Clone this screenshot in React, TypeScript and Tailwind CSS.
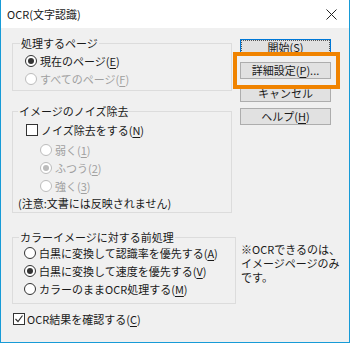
import React from 'react';

const font = { fontFamily: '"Noto Sans CJK JP", "Noto Sans", sans-serif' };

function Key({ k }: { k: string }) {
  return (
    <>
      (<span className="underline underline-offset-2">{k}</span>)
    </>
  );
}

function Radio({ checked, disabled }: { checked?: boolean; disabled?: boolean }) {
  return (
    <span
      className={`flex h-[12px] w-[12px] shrink-0 items-center justify-center rounded-full border bg-white ${
        disabled ? 'border-[#bcbcbc]' : 'border-[#333]'
      }`}
    >
      {checked && (
        <span className={`h-[6px] w-[6px] rounded-full ${disabled ? 'bg-[#bcbcbc]' : 'bg-[#333]'}`} />
      )}
    </span>
  );
}

function Check({ checked }: { checked?: boolean }) {
  return (
    <span className="flex h-[12px] w-[12px] shrink-0 items-center justify-center border border-[#333] bg-white">
      {checked && (
        <svg width="10" height="10" viewBox="0 0 10 10">
          <path d="M1.5 5 L4 7.5 L8.5 1.5" fill="none" stroke="#333" strokeWidth="1.2" />
        </svg>
      )}
    </span>
  );
}

function Btn({ children, isDefault }: { children: React.ReactNode; isDefault?: boolean }) {
  return (
    <div
      className={`flex h-[17px] w-[91px] items-center justify-center bg-[#e1e1e1] text-[11px] leading-none ${
        isDefault ? 'border border-[#0078d7]' : 'border border-[#adadad]'
      }`}
    >
      {isDefault ? (
        <div className="flex h-full w-full items-center justify-center border border-dotted border-[#555]">
          {children}
        </div>
      ) : (
        children
      )}
    </div>
  );
}

export default function App() {
  return (
    <div
      className="relative flex h-[343px] w-[350px] flex-col border-x border-b border-[#179bd7] bg-[#f0f0f0] text-[#1a1a1a]"
      style={font}
    >
      {/* title bar */}
      <div className="flex h-[28px] items-center justify-between bg-white pl-[6px] pr-[12px]">
        <span className="text-[11px]">OCR(文字認識)</span>
        <svg width="11" height="11" viewBox="0 0 11 11">
          <path d="M0.5 0.5 L10.5 10.5 M10.5 0.5 L0.5 10.5" stroke="#222" strokeWidth="1" />
        </svg>
      </div>

      <div className="flex pl-[11px] pt-[8px]">
        <div className="flex w-[220px] flex-col gap-[13px]">
          <fieldset className="border border-[#dcdcdc] px-[12px] pt-[2px] pb-[2px]">
            <legend className="ml-[-5px] px-[1px] text-[11px] leading-[14px]">処理するページ</legend>
            <div className="flex h-[18px] items-center gap-[3px] text-[11px]">
              <Radio checked />
              <span>
                現在のページ<Key k="E" />
              </span>
            </div>
            <div className="flex h-[18px] items-center gap-[3px] text-[11px] text-[#a0a0a0]">
              <Radio disabled />
              <span>
                すべてのページ<Key k="F" />
              </span>
            </div>
          </fieldset>

          <fieldset className="border border-[#dcdcdc] pl-[5px] pt-[3px] pb-[0px]">
            <legend className="ml-[0px] px-[1px] text-[11px] leading-[14px]">イメージのノイズ除去</legend>
            <div className="flex h-[18px] items-center gap-[3px] pl-[8px] text-[11px]">
              <Check />
              <span>
                ノイズ除去をする<Key k="N" />
              </span>
            </div>
            <div className="flex flex-col pl-[22px] pt-[2px] text-[11px] text-[#a0a0a0]">
              <div className="flex h-[18px] items-center gap-[3px]">
                <Radio disabled />
                <span>
                  弱く<Key k="1" />
                </span>
              </div>
              <div className="flex h-[18px] items-center gap-[3px]">
                <Radio checked disabled />
                <span>
                  ふつう<Key k="2" />
                </span>
              </div>
              <div className="flex h-[18px] items-center gap-[3px]">
                <Radio disabled />
                <span>
                  強く<Key k="3" />
                </span>
              </div>
            </div>
            <div className="flex h-[17px] items-center text-[11px]">(注意:文書には反映されません)</div>
          </fieldset>
        </div>

        <div className="ml-[8px] flex flex-col gap-[6px] pt-[3px]">
          <Btn isDefault>
            開始<Key k="S" />
          </Btn>
          <Btn>
            詳細設定<Key k="P" />...
          </Btn>
          <Btn>キャンセル</Btn>
          <Btn>
            ヘルプ<Key k="H" />
          </Btn>
        </div>
      </div>

      <div className="flex pl-[11px] pt-[17px]">
        <fieldset className="w-[224px] border border-[#dcdcdc] pl-[11px] pb-[5px]">
          <legend className="ml-[-5px] px-[1px] text-[11px] leading-[14px]">カラーイメージに対する前処理</legend>
          <div className="flex h-[18px] items-center gap-[3px] text-[11px]">
            <Radio />
            <span>
              白黒に変換して認識率を優先する<Key k="A" />
            </span>
          </div>
          <div className="flex h-[18px] items-center gap-[3px] text-[11px]">
            <Radio checked />
            <span>
              白黒に変換して速度を優先する<Key k="V" />
            </span>
          </div>
          <div className="flex h-[18px] items-center gap-[3px] text-[11px]">
            <Radio />
            <span>
              カラーのままOCR処理する<Key k="M" />
            </span>
          </div>
        </fieldset>
        <div className="ml-[5px] flex flex-col pt-[12px] text-[11px]">
          <div className="flex h-[14px] items-center">※OCRできるのは、</div>
          <div className="flex h-[14px] items-center">イメージページのみ</div>
          <div className="flex h-[14px] items-center">です。</div>
        </div>
      </div>

      <div className="mt-[6px] flex h-[18px] items-center gap-[2px] pl-[12px] text-[11px]">
        <Check checked />
        <span>
          OCR結果を確認する<Key k="C" />
        </span>
      </div>

      {/* highlight box */}
      <div className="absolute left-[232px] top-[52px] h-[37px] w-[107px] border-[4px] border-[#f08300]" />
    </div>
  );
}
